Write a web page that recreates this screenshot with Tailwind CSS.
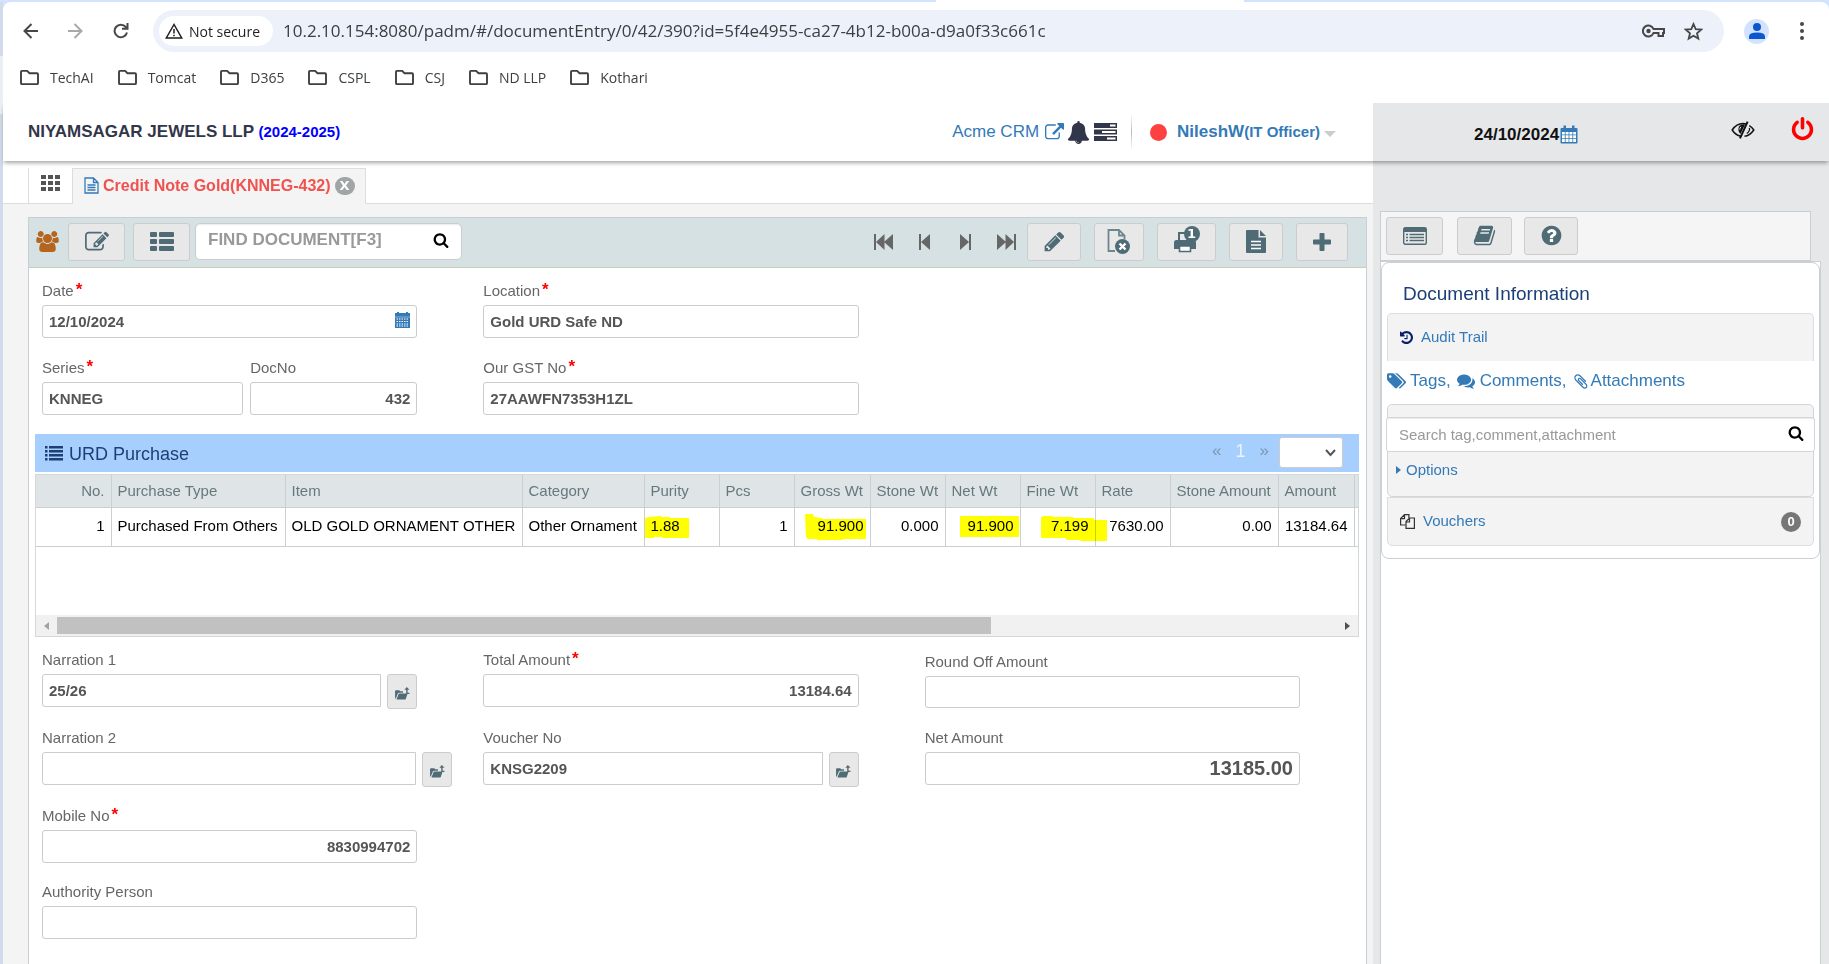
<!DOCTYPE html>
<html lang="en">
<head>
  <title>Credit Note Gold(KNNEG-432)</title>
  <meta charset="utf-8">
  <meta name="viewport" content="width=device-width, initial-scale=1">
  <script src="https://cdn.jsdelivr.net/npm/@tailwindcss/browser@4"></script>
</head>
<body class="min-h-screen flex flex-col bg-[#d3e3fd] font-['Liberation_Sans',Arial,sans-serif] text-[15px]">

  <!-- shared icons -->
  <svg class="hidden">
    <symbol id="i-search" viewBox="0 0 1792 1792"><path d="M1216 832q0-185-131.5-316.5t-316.5-131.5-316.5 131.5-131.5 316.5 131.5 316.5 316.5 131.5 316.5-131.5 131.5-316.5zm512 832q0 52-38 90t-90 38q-54 0-90-38l-343-342q-179 124-399 124-143 0-273.5-55.5t-225-150-150-225-55.5-273.5 55.5-273.5 150-225 225-150 273.5-55.5 273.5 55.5 225 150 150 225 55.5 273.5q0 220-124 399l343 343q37 37 37 90z"/></symbol>
    <symbol id="i-folder" viewBox="0 0 22 18"><path d="M2 15V3q0-1 1-1h5.500l2.500 2.500h8q1 0 1 1V15q0 1-1 1H3q-1 0-1-1z" fill="none" stroke="currentColor" stroke-width="2"/></symbol>
    <symbol id="i-open" viewBox="0 0 16 14"><path d="M0 12.500V4.500q0-1 1-1h3.500l1 1h3v1.700H4.200q-.8 0-1.200.8L.8 12.500zM1.500 13.500l2.200-5.700q.3-.7 1-.7h8.800l-2 5.700q-.3.7-1 .7z"/><path d="M12.700 0l2.800 3h-2v3.300h2V7.500H12V3h-2z"/></symbol>
  </svg>

  <!-- tab strip edge -->
  <div class="h-[2px] flex">
    <div class="ml-[51.200%] w-[308px] bg-white"></div>
  </div>

  <div class="flex-1 flex">
    <div class="w-[3px] bg-[#d1dbea] flex flex-col">
      <div class="mt-[54px] h-[58px] bg-[#ebeff4]"></div>
    </div>

    <div class="flex-1 min-w-0 flex flex-col bg-white rounded-t-lg">

      <!-- browser toolbar -->
      <div class="mt-2 h-[42px] flex items-center text-[#3c4043] font-['Open_Sans','Noto_Sans',sans-serif]">
        <button type="button" aria-label="Back" class="ml-5 w-4">
          <svg class="w-4 h-4" viewBox="0 0 16 16" fill="none" stroke="#474747" stroke-width="2"><path d="M15 8H2M8.500 1L1.500 8l7 7"/></svg>
        </button>
        <button type="button" aria-label="Forward" class="ml-7 w-4">
          <svg class="w-4 h-4" viewBox="0 0 16 16" fill="none" stroke="#a9a9a9" stroke-width="2"><path d="M1 8h13M7.500 1l7 7-7 7"/></svg>
        </button>
        <button type="button" aria-label="Reload" class="ml-[30px] w-4">
          <svg class="w-4 h-4" viewBox="0 0 16 16" fill="none" stroke="#474747" stroke-width="2"><path d="M14 9.500A6.300 6.300 0 1 1 12.800 4L14 5.300"/><path d="M14.500 0v5.800H9"/></svg>
        </button>
        <div class="ml-6 mr-[20px] pl-1.5 flex-1 h-full rounded-full bg-[#ecf1fa] flex items-center">
          <button type="button" class="h-[30px] w-[114px] pl-1.5 rounded-full bg-white text-[#1f1f1f] text-[14px] flex items-center gap-1.5">
            <svg class="w-[18px] h-[16px]" viewBox="0 0 18 16" fill="none" stroke="#1f1f1f" stroke-width="1.500"><path d="M9 1.500L1.300 15h15.400zM9 6v4.500M9 11.700v1.600"/></svg>
            Not secure
          </button>
          <input type="text" aria-label="Address" value="10.2.10.154:8080/padm/#/documentEntry/0/42/390?id=5f4e4955-ca27-4b12-b00a-d9a0f33c661c" class="ml-[10px] flex-1 bg-transparent text-[17px] outline-none">
          <button type="button" aria-label="Passwords" class="mr-[19px]">
            <svg class="w-[23px] h-[14px]" viewBox="0 0 23 14" fill="none" stroke="#474747" stroke-width="2"><path d="M11.500 5A5.500 5.500 0 1 0 11.500 9H15v0h1.500v3h4.500V9h1V5z"/><circle cx="6.500" cy="7" r="2.200" fill="#474747" stroke="none"/></svg>
          </button>
          <button type="button" aria-label="Bookmark" class="mr-[21px]">
            <svg class="w-[19px] h-[19px]" viewBox="0 0 19 19" fill="none" stroke="#474747" stroke-width="1.800"><path d="M9.500 2l2.200 5.100 5.500.5-4.200 3.600 1.300 5.400-4.800-2.900-4.800 2.900L6 11.200 1.800 7.600l5.500-.5z"/></svg>
          </button>
        </div>
        <button type="button" aria-label="Profile" class="w-[25px] h-[25px] rounded-full bg-[#d3e3fd] flex items-center justify-center">
          <svg class="w-4 h-4" viewBox="0 0 16 16" fill="#0b57d0"><circle cx="8" cy="4" r="4"/><path d="M0 16v-2.500Q0 9.500 8 9.500t8 4V16z"/></svg>
        </button>
        <button type="button" aria-label="Menu" class="ml-[31px] mr-[25px]">
          <svg class="w-1 h-[18px]" viewBox="0 0 4 18" fill="#474747"><circle cx="2" cy="2" r="2"/><circle cx="2" cy="9" r="2"/><circle cx="2" cy="16" r="2"/></svg>
        </button>
      </div>

      <!-- bookmarks -->
      <nav class="h-[51px] pl-4 flex items-center gap-[23px] text-[14px] text-[#3c4043] font-['Open_Sans','Noto_Sans',sans-serif]">
        <a href="#" class="flex items-center gap-2.5"><svg class="w-[21px] h-[17px]"><use href="#i-folder"/></svg>TechAI</a>
        <a href="#" class="flex items-center gap-2.5"><svg class="w-[21px] h-[17px]"><use href="#i-folder"/></svg>Tomcat</a>
        <a href="#" class="flex items-center gap-2.5"><svg class="w-[21px] h-[17px]"><use href="#i-folder"/></svg>D365</a>
        <a href="#" class="flex items-center gap-2.5"><svg class="w-[21px] h-[17px]"><use href="#i-folder"/></svg>CSPL</a>
        <a href="#" class="flex items-center gap-2.5"><svg class="w-[21px] h-[17px]"><use href="#i-folder"/></svg>CSJ</a>
        <a href="#" class="flex items-center gap-2.5"><svg class="w-[21px] h-[17px]"><use href="#i-folder"/></svg>ND LLP</a>
        <a href="#" class="flex items-center gap-2.5"><svg class="w-[21px] h-[17px]"><use href="#i-folder"/></svg>Kothari</a>
      </nav>

      <!-- app header -->
      <header class="relative z-10 h-[58px] flex shadow-[0_3px_4px_-1px_rgba(0,0,0,0.35)]">
        <div class="flex-1 pl-[25px] pr-[37px] bg-white flex items-center">
          <h1 class="font-bold text-[17px] text-[#32364a]">NIYAMSAGAR JEWELS LLP <span class="text-[15px] text-[#0000ff]">(2024-2025)</span></h1>
          <a href="#" class="ml-auto flex items-center gap-1.5 text-[17px] text-[#337ab7]">
            Acme CRM
            <svg class="w-[19px] h-[19px]" viewBox="0 0 1792 1792" fill="currentColor"><path d="M1408 928v320q0 119-84.500 203.500t-203.500 84.500h-832q-119 0-203.500-84.500t-84.500-203.500v-832q0-119 84.500-203.500t203.500-84.500h704q14 0 23 9t9 23v64q0 14-9 23t-23 9h-704q-66 0-113 47t-47 113v832q0 66 47 113t113 47h832q66 0 113-47t47-113v-320q0-14 9-23t23-9h64q14 0 23 9t9 23zm384-864v512q0 26-19 45t-45 19-45-19l-176-176-652 652q-10 10-23 10t-23-10l-114-114q-10-10-10-23t10-23l652-652-176-176q-19-19-19-45t19-45 45-19h512q26 0 45 19t19 45z"/></svg>
          </a>
          <button type="button" aria-label="Notifications" class="ml-[3px]">
            <svg class="w-[23px] h-[23px]" viewBox="0 0 1792 1792" fill="#32364a"><path d="M912 1696q0-16-16-16-59 0-101.500-42.500t-42.500-101.500q0-16-16-16t-16 16q0 73 51.500 124.500t124.500 51.500q16 0 16-16zm816-288q0 52-38 90t-90 38h-448q0 106-75 181t-181 75-181-75-75-181h-448q-52 0-90-38t-38-90q50-42 91-88t85-119.500 74.500-158.500 50-206 19.500-260q0-152 117-282.500t307-158.500q-8-19-8-39 0-40 28-68t68-28 68 28 28 68q0 20-8 39 190 28 307 158.500t117 282.500q0 139 19.500 260t50 206 74.500 158.500 85 119.500 91 88z"/></svg>
          </button>
          <button type="button" aria-label="Tasks" class="ml-1">
            <svg class="w-[23px] h-[18px]" viewBox="0 0 23 18"><path fill="#32364a" d="M0 0h23v5H0zM0 6.500h23v5H0zM0 13h23v5H0z"/><path fill="#fff" d="M16 1.500h5.500v2H16zM8 8h13.500v2H8zM13 14.500h8.500v2H13z"/></svg>
          </button>
          <div class="ml-[14px] w-px h-[38px] bg-linear-to-b from-transparent via-[#bbb] to-transparent"></div>
          <span class="ml-[18px] w-[17px] h-[17px] rounded-full bg-[#ff4040]"></span>
          <button type="button" class="ml-2.5 font-bold text-[17px] text-[#337ab7] flex items-center">
            <span>NileshW<span class="text-[15px]">(IT Officer)</span></span>
            <span class="ml-1 mt-1 border-x-6 border-t-6 border-x-transparent border-t-[#ccc]"></span>
          </button>
        </div>
        <div class="w-[456px] bg-[#e6e7e9] pl-[101px] pr-[14px] flex items-center">
          <time class="mt-1.5 font-bold text-[17px] text-[#111]">24/10/2024</time>
          <svg class="ml-px mt-1 w-[18px] h-[19px]" viewBox="0 0 18 19"><path fill="#337ab7" d="M1.500 3h15q1 0 1 1v13.500q0 1-1 1h-15q-1 0-1-1V4q0-1 1-1zM3.500.5h2.500v4H3.500zM12 .5h2.500v4H12z"/><path fill="#fff" d="M2 7h2.800v2.500H2zM5.600 7h3v2.500h-3zM9.400 7h3v2.500h-3zM13.200 7H16v2.500h-2.800zM2 10.300h2.800V13H2zM5.600 10.300h3V13h-3zM9.400 10.300h3V13h-3zM13.200 10.300H16V13h-2.800zM2 13.800h2.800V17H2zM5.600 13.800h3V17h-3zM9.400 13.800h3V17h-3zM13.200 13.800H16V17h-2.800z"/></svg>
          <button type="button" aria-label="Hide" class="ml-auto mb-1">
            <svg class="w-6 h-[18px]" viewBox="0 0 24 18" fill="none" stroke="#111" stroke-width="1.500"><path d="M15.500 3.300Q13.800 2.600 12 2.600 5.500 2.600 1.200 9q3.600 5.500 8.600 6.200"/><path d="M18.300 4.700Q21 6.400 22.800 9q-4 5.800-9.300 6.300"/><path d="M18.400 7q.8 3-2.600 5.600" stroke-width="1.300"/><path d="M8.300 5Q5.800 9.500 9.500 13L14 3.500Q10.500 2.800 8.300 5z" fill="#111" stroke="none"/><path d="M10 5.800Q8.600 7 8.800 8.600" stroke="#e6e7e9" stroke-width="1"/><path d="M9 17.300L16.600.7" stroke-width="2"/></svg>
          </button>
          <button type="button" aria-label="Log out" class="ml-[35px] mb-[5px]">
            <svg class="w-[25px] h-[25px]" viewBox="0 0 1792 1792" fill="#ff0000"><path d="M1664 896q0 156-61 298t-164 245-245 164-298 61-298-61-245-164-164-245-61-298q0-182 80.500-343t226.500-270q43-32 95.500-25t83.500 50q32 42 24.500 94.500t-49.500 84.500q-98 74-151.500 181t-53.500 228q0 104 40.500 198.500t109.500 163.500 163.500 109.500 198.500 40.500 198.500-40.500 163.500-109.500 109.500-163.500 40.500-198.500q0-121-53.500-228t-151.500-181q-42-32-49.500-84.500t24.500-94.500q31-43 84-50t95 25q146 109 226.500 270t80.500 343zm-640-768v640q0 52-38 90t-90 38-90-38-38-90v-640q0-52 38-90t90-38 90 38 38 90z"/></svg>
          </button>
        </div>
      </header>

      <div class="flex-1 flex">
        <main class="flex-1 min-w-0 flex flex-col bg-[#f4f4f4]">

          <!-- document tabs -->
          <div class="h-[43px] bg-white flex items-end">
            <div class="w-[25px] h-[36px] border-b border-[#ddd]"></div>
            <button type="button" aria-label="All modules" class="w-[44px] h-[36px] border-l border-b border-[#ddd] flex justify-center pt-[7px]">
              <svg class="w-[19px] h-[16px]" viewBox="0 0 19 16" fill="#555"><path d="M0 0h5v4H0zM7 0h5v4H7zM14 0h5v4h-5zM0 6h5v4H0zM7 6h5v4H7zM14 6h5v4h-5zM0 12h5v4H0zM7 12h5v4H7zM14 12h5v4h-5z"/></svg>
            </button>
            <div class="w-[294px] h-[36px] border-x border-t border-[#ddd] bg-[#f4f4f4] pl-[11px] pb-[2px] flex items-center">
              <svg class="w-[15px] h-[17px]" viewBox="0 0 15 17" fill="none" stroke="#337ab7" stroke-width="1.300"><path d="M1 1h8.500L14 5.500V16H1zM9.500 1v4.500H14M3.500 8h8M3.500 10.500h8M3.500 13h8"/></svg>
              <a href="#" class="ml-[4px] font-bold text-[16px] text-[#f0524f]">Credit Note Gold(KNNEG-432)</a>
              <button type="button" aria-label="Close" class="ml-1 w-5 h-[18px] rounded-full bg-[#a0a5a5] text-white text-[13px] font-bold leading-[18px] font-['DejaVu_Sans',sans-serif]">X</button>
            </div>
            <div class="flex-1 h-[36px] border-b border-[#ddd]"></div>
          </div>

          <section class="flex-1 mt-[13px] ml-[25px] mr-[6px] bg-white border border-b-0 border-[#c8cfd2]">

            <!-- document toolbar -->
            <div class="h-[50px] pl-[7px] pr-[18px] pb-[2px] bg-[#d6e1e4] border-b border-[#c6cfb6] flex items-center text-[#4f6b76]">
              <svg class="w-[23px] h-[21px]" viewBox="-64 0 1920 1792" fill="#b5651d"><path d="M529 896q-162 5-265 128h-134q-82 0-138-40.500t-56-118.500q0-353 124-353 6 0 43.500 21t97.500 42.500 119 21.500q67 0 133-23-5 37-5 66 0 139 81 256zm1071 637q0 120-73 189.500t-194 69.500h-874q-121 0-194-69.500t-73-189.500q0-53 3.500-103.500t14-109 26.500-108.500 43-97.500 62-81 85.500-53.500 111.500-20q10 0 43 21.500t73 48 107 48 135 21.500 135-21.500 107-48 73-48 43-21.500q61 0 111.500 20t85.500 53.500 62 81 43 97.500 26.500 108.500 14 109 3.500 103.500zm-1024-1277q0 106-75 181t-181 75-181-75-75-181 75-181 181-75 181 75 75 181zm704 384q0 159-112.500 271.500t-271.500 112.500-271.500-112.500-112.500-271.500 112.500-271.500 271.500-112.500 271.500 112.500 112.500 271.500zm576 225q0 78-56 118.500t-138 40.500h-134q-103-123-265-128 81-117 81-256 0-29-5-66 66 23 133 23 59 0 119-21.500t97.500-42.500 43.500-21q124 0 124 353zm-128-609q0 106-75 181t-181 75-181-75-75-181 75-181 181-75 181 75 75 181z"/></svg>
              <button type="button" aria-label="Edit entry" class="ml-[9px] w-[57px] h-[38px] rounded-[3px] border border-[#ccc] bg-[#e8e8e8] flex items-center justify-center">
                <svg class="w-[24px] h-[24px]" viewBox="0 0 1792 1792" fill="currentColor"><path d="M888 1184l116-116-152-152-116 116v56h96v96h56zm440-720q-16-16-33 1l-350 350q-17 17-1 33t33-1l350-350q17-17 1-33zm80 594v190q0 119-84.500 203.500t-203.500 84.500h-832q-119 0-203.500-84.500t-84.500-203.500v-832q0-119 84.500-203.500t203.500-84.500h832q63 0 117 25 15 7 18 23 3 17-9 29l-49 49q-14 14-32 8-23-6-45-6h-832q-66 0-113 47t-47 113v832q0 66 47 113t113 47h832q66 0 113-47t47-113v-126q0-13 9-22l64-64q15-15 35-7t20 29zm-96-738l288 288-672 672h-288v-288zm444 132l-92 92-288-288 92-92q28-28 68-28t68 28l152 152q28 28 28 68t-28 68z"/></svg>
              </button>
              <button type="button" aria-label="List" class="ml-2 w-[57px] h-[38px] rounded-[3px] border border-[#ccc] bg-[#e8e8e8] flex items-center justify-center">
                <svg class="w-6 h-[19px]" viewBox="0 0 24 19" fill="currentColor"><rect width="7" height="5" rx="1"/><rect x="9" width="15" height="5" rx="1"/><rect y="7" width="7" height="5" rx="1"/><rect x="9" y="7" width="15" height="5" rx="1"/><rect y="14" width="7" height="5" rx="1"/><rect x="9" y="14" width="15" height="5" rx="1"/></svg>
              </button>
              <div class="ml-[5px] w-[267px] h-[37px] px-3 pb-[3px] rounded-[5px] border border-[#ccc] bg-white shadow-[inset_0_1px_1px_rgba(0,0,0,0.08)] flex items-center">
                <input type="text" aria-label="Find document" placeholder="FIND DOCUMENT[F3]" class="min-w-0 flex-1 font-bold text-[17px] placeholder:text-[#999] outline-none">
                <svg class="w-4 h-4 text-black"><use href="#i-search" fill="currentColor"/></svg>
              </div>
              <div class="ml-auto flex text-[#666]">
                <button type="button" aria-label="First" class="w-[41px] flex justify-center"><svg class="w-[19px] h-4" viewBox="0 0 19 16" fill="currentColor"><path d="M0 0h2v16H0zM2 8l8.500-8v16zM10 8l9-8v16z"/></svg></button>
                <button type="button" aria-label="Previous" class="w-[41px] flex justify-center"><svg class="w-[11px] h-4" viewBox="0 0 11 16" fill="currentColor"><path d="M0 0h2v16H0zM2 8l9-8v16z"/></svg></button>
                <button type="button" aria-label="Next" class="w-[41px] flex justify-center"><svg class="w-[11px] h-4" viewBox="0 0 11 16" fill="currentColor"><path d="M9 0h2v16H9zM9 8L0 0v16z"/></svg></button>
                <button type="button" aria-label="Last" class="w-[41px] flex justify-center"><svg class="w-[19px] h-4" viewBox="0 0 19 16" fill="currentColor"><path d="M17 0h2v16h-2zM17 8L8.500 0v16zM9 8L0 0v16z"/></svg></button>
              </div>
              <div class="flex gap-[13px]">
                <button type="button" aria-label="Edit" class="w-[54px] h-[38px] rounded-[3px] border border-[#ccc] bg-[#e8e8e8] flex items-center justify-center">
                  <svg class="w-[23px] h-[23px]" viewBox="0 0 1792 1792" fill="currentColor"><path d="M491 1536l91-91-235-235-91 91v107h128v128h107zm523-928q0-22-22-22-10 0-17 7l-542 542q-7 7-7 17 0 22 22 22 10 0 17-7l542-542q7-7 7-17zm-54-192l416 416-832 832h-416v-416zm683 96q0 53-37 90l-166 166-416-416 166-165q36-38 90-38 53 0 91 38l235 234q37 39 37 91z"/></svg>
                </button>
                <button type="button" aria-label="Cancel document" class="w-[50px] h-[38px] rounded-[3px] border border-[#ccc] bg-[#e8e8e8] flex items-center justify-center">
                  <svg class="w-6 h-[26px]" viewBox="0 0 24 26"><path d="M8 22H1.500V1H12l5.500 5.500V10M12 1v5.500h5.500" fill="none" stroke="#6d8790" stroke-width="1.800"/><circle cx="15.500" cy="17.500" r="7.500" fill="#4f6b76"/><path d="M12.500 14.500l6 6M18.500 14.500l-6 6" stroke="#fff" stroke-width="2.400"/></svg>
                </button>
                <button type="button" aria-label="Print" class="w-[59px] h-[38px] rounded-[3px] border border-[#ccc] bg-[#e8e8e8] flex items-center justify-center">
                  <span class="relative -mt-1">
                    <svg class="w-[26px] h-[27px]" viewBox="0 0 26 27"><path d="M5 16V7h9l4 4v5" fill="none" stroke="#4f6b76" stroke-width="2"/><path d="M2.500 14h17q2.500 0 2.500 2.500V23H0v-6.500Q0 14 2.500 14z" fill="#4f6b76"/><path d="M5.500 20h11v5.500h-11z" fill="#fff" stroke="#4f6b76" stroke-width="1.600"/></svg>
                    <span class="absolute top-0 right-0 w-4 h-4 rounded-full bg-[#4f6b76] text-white text-[13px] font-bold leading-4 text-center font-['DejaVu_Sans',sans-serif]">1</span>
                  </span>
                </button>
                <button type="button" aria-label="Report" class="w-[54px] h-[38px] rounded-[3px] border border-[#ccc] bg-[#e8e8e8] flex items-center justify-center">
                  <svg class="w-5 h-[23px]" viewBox="0 0 20 23"><path d="M1 0h11.500v7.500H20V22q0 1-1 1H1q-1 0-1-1V1q0-1 1-1zM14 0l6 6h-6z" fill="#4f6b76"/><path d="M5 11.500h10M5 15h10M5 18.500h10" stroke="#fff" stroke-width="1.500"/></svg>
                </button>
                <button type="button" aria-label="New" class="w-[52px] h-[38px] rounded-[3px] border border-[#ccc] bg-[#e8e8e8] flex items-center justify-center">
                  <svg class="w-[18px] h-[18px]" viewBox="0 0 18 18" fill="currentColor"><path d="M7.500 0h3q1 0 1 1v5.500H17q1 0 1 1v3q0 1-1 1h-5.500V17q0 1-1 1h-3q-1 0-1-1v-5.500H1q-1 0-1-1v-3q0-1 1-1h5.500V1q0-1 1-1z"/></svg>
                </button>
              </div>
            </div>

            <div class="pl-[6px] pr-[7px] pt-[13px] text-[#666]">
              <div class="grid grid-cols-3 gap-y-5 pl-[7px] -mr-[7px]">
                <div class="mr-[66px]">
                  <label for="date" class="block h-6 leading-[20px]">Date<span class="ml-[2px] text-[17px] leading-none font-bold text-[#f00] align-top">*</span></label>
                  <div class="h-[33px] px-1.5 rounded-[3px] border border-[#ccc] flex items-center">
                    <input id="date" type="text" value="12/10/2024" class="min-w-0 flex-1 h-full font-bold text-[#555] outline-none">
                    <svg class="mb-1 w-[15px] h-4" viewBox="0 0 15 16"><path fill="#337ab7" d="M0 1h2V0h2v1h7V0h2v1h2v15H0z"/><path d="M1.500 7h12M1.500 9.500h12M1.500 12h12M1.500 14h12" stroke="#fff" stroke-width="1" stroke-dasharray="1.500 1"/><path d="M0 5h15" stroke="#9fc0de" stroke-width=".8"/></svg>
                  </div>
                </div>
                <div class="mr-[66px]">
                  <label for="location" class="block h-6 leading-[20px]">Location<span class="ml-[2px] text-[17px] leading-none font-bold text-[#f00] align-top">*</span></label>
                  <input id="location" type="text" value="Gold URD Safe ND" class="w-full h-[33px] px-1.5 rounded-[3px] border border-[#ccc] font-bold text-[#555]">
                </div>
                <div class="col-start-1 mr-[66px] flex gap-[7px]">
                  <div class="flex-[201] min-w-0">
                    <label for="series" class="block h-6 leading-[20px]">Series<span class="ml-[2px] text-[17px] leading-none font-bold text-[#f00] align-top">*</span></label>
                    <input id="series" type="text" value="KNNEG" class="w-full h-[33px] px-1.5 rounded-[3px] border border-[#ccc] font-bold text-[#555]">
                  </div>
                  <div class="flex-[167] min-w-0">
                    <label for="docno" class="block h-6 leading-[20px]">DocNo</label>
                    <input id="docno" type="text" value="432" class="w-full h-[33px] px-1.5 rounded-[3px] border border-[#ccc] font-bold text-[#555] text-right">
                  </div>
                </div>
                <div class="mr-[66px]">
                  <label for="gst" class="block h-6 leading-[20px]">Our GST No<span class="ml-[2px] text-[17px] leading-none font-bold text-[#f00] align-top">*</span></label>
                  <input id="gst" type="text" value="27AAWFN7353H1ZL" class="w-full h-[33px] px-1.5 rounded-[3px] border border-[#ccc] font-bold text-[#555]">
                </div>
              </div>

              <!-- purchase grid -->
              <div class="mt-[19px] h-[38px] pl-[10px] pr-4 bg-[#a7cffd] flex items-center text-[#1d3f77]">
                <svg class="w-[18px] h-[15px]" viewBox="0 0 18 15" fill="currentColor"><path d="M0 0h2.500v2.500H0zM4 0h14v2.500H4zM0 4h2.500v2.500H0zM4 4h14v2.500H4zM0 8h2.500v2.500H0zM4 8h14v2.500H4zM0 12h2.500v2.500H0zM4 12h14v2.500H4z"/></svg>
                <h2 class="ml-[6px] pt-[2px] text-[18px]">URD Purchase</h2>
                <button type="button" class="ml-auto mb-1 text-[17px] text-[#7d95b5]">«</button>
                <button type="button" class="mx-[14px] mb-1 text-[18px] text-[#eaf3ff]">1</button>
                <button type="button" class="mb-1 text-[17px] text-[#7d95b5]">»</button>
                <div class="relative ml-[10px] mb-[2px]">
                  <select aria-label="Rows per page" class="block w-[64px] h-[31px] appearance-none rounded-[3px] border border-[#ccc] bg-white"><option></option></select>
                  <svg class="absolute right-[7px] top-[12px] w-[11px] h-2 pointer-events-none" viewBox="0 0 11 8" fill="none" stroke="#555" stroke-width="2"><path d="M1 1l4.500 5L10 1"/></svg>
                </div>
              </div>
              <div class="mt-[2px] h-[163px] border border-[#d5d8d9] flex flex-col overflow-hidden">
                <table class="w-full table-fixed border-collapse text-[15px] whitespace-nowrap">
                  <colgroup>
                    <col class="w-[75px]"><col class="w-[174px]"><col class="w-[237px]"><col class="w-[122px]"><col class="w-[75px]"><col class="w-[75px]"><col class="w-[76px]"><col class="w-[75px]"><col class="w-[75px]"><col class="w-[75px]"><col class="w-[75px]"><col class="w-[108px]"><col class="w-[76px]"><col>
                  </colgroup>
                  <thead>
                    <tr class="h-8 bg-[#dfe5e7] text-[#66787e] text-left border-b border-[#c8d0d3]">
                      <th class="px-1.5 font-normal text-right border-r border-[#c8d0d3]">No.</th>
                      <th class="px-1.5 font-normal border-r border-[#c8d0d3]">Purchase Type</th>
                      <th class="px-1.5 font-normal border-r border-[#c8d0d3]">Item</th>
                      <th class="px-1.5 font-normal border-r border-[#c8d0d3]">Category</th>
                      <th class="px-1.5 font-normal border-r border-[#c8d0d3]">Purity</th>
                      <th class="px-1.5 font-normal border-r border-[#c8d0d3]">Pcs</th>
                      <th class="px-1.5 font-normal border-r border-[#c8d0d3]">Gross Wt</th>
                      <th class="px-1.5 font-normal border-r border-[#c8d0d3]">Stone Wt</th>
                      <th class="px-1.5 font-normal border-r border-[#c8d0d3]">Net Wt</th>
                      <th class="px-1.5 font-normal border-r border-[#c8d0d3]">Fine Wt</th>
                      <th class="px-1.5 font-normal border-r border-[#c8d0d3]">Rate</th>
                      <th class="px-1.5 font-normal border-r border-[#c8d0d3]">Stone Amount</th>
                      <th class="px-1.5 font-normal border-r border-[#c8d0d3]">Amount</th>
                      <th></th>
                    </tr>
                  </thead>
                  <tbody>
                    <tr class="h-[39px] text-black text-right border-b border-[#c8d0d3]">
                      <td class="px-1.5 border-r border-[#c8d0d3]">1</td>
                      <td class="px-1.5 text-left border-r border-[#c8d0d3]">Purchased From Others</td>
                      <td class="px-1.5 text-left border-r border-[#c8d0d3]">OLD GOLD ORNAMENT OTHER</td>
                      <td class="px-1.5 text-left border-r border-[#c8d0d3]">Other Ornament</td>
                      <td class="relative px-1.5 text-left border-r border-[#c8d0d3]"><svg class="absolute left-0 top-[8px] w-[44px] h-[23px] mix-blend-multiply" viewBox="0 0 44 23" fill="#ffff00"><path d="M0 2l4-1 12-1 1 1h8v1h19v20H18l-1-1H9v1H0z"/></svg><span class="relative">1.88</span></td>
                      <td class="px-1.5 border-r border-[#c8d0d3]">1</td>
                      <td class="relative px-1.5 border-r border-[#c8d0d3]"><svg class="absolute right-[4px] top-[6px] w-[61px] h-[27px] mix-blend-multiply" viewBox="0 0 61 27" fill="#ffff00"><path d="M0 0h8l1 3 8 1v1h44v20H38v1H12v-1H3l-2-2z"/></svg><span class="relative">91.900</span></td>
                      <td class="px-1.5 border-r border-[#c8d0d3]">0.000</td>
                      <td class="relative px-1.5 border-r border-[#c8d0d3]"><svg class="absolute right-[1px] top-[8px] w-[59px] h-[21px] mix-blend-multiply" viewBox="0 0 59 21" fill="#ffff00"><path d="M0 0h59v21H0z"/></svg><span class="relative">91.900</span></td>
                      <td class="relative px-1.5 border-r border-[#c8d0d3]"><svg class="absolute left-[20px] top-[8px] w-[66px] h-[26px] mix-blend-multiply" viewBox="0 0 66 26" fill="#ffff00"><path d="M0 1l3-1h9v1h20l1 1h20v2h13v21H40l-1-1H26l-2-2H0z"/></svg><span class="relative">7.199</span></td>
                      <td class="px-1.5 border-r border-[#c8d0d3]">7630.00</td>
                      <td class="px-1.5 border-r border-[#c8d0d3]">0.00</td>
                      <td class="px-1.5 border-r border-[#c8d0d3]">13184.64</td>
                      <td></td>
                    </tr>
                  </tbody>
                </table>
                <div class="mt-auto h-[21px] px-2 bg-[#f1f1f1] flex items-center">
                  <span class="border-y-4 border-r-5 border-y-transparent border-r-[#a3a3a3]"></span>
                  <div class="flex-1 mx-2"><div class="w-[73%] h-[17px] bg-[#c1c1c1]"></div></div>
                  <span class="border-y-4 border-l-5 border-y-transparent border-l-[#505050]"></span>
                </div>
              </div>

              <div class="mt-[13px] grid grid-cols-3 gap-y-[19px] pl-[7px] -mr-[7px]">
                <div class="mr-[66px]">
                  <label for="narration1" class="block h-6 leading-[20px]">Narration 1</label>
                  <div class="flex gap-1.5">
                    <input id="narration1" type="text" value="25/26" class="min-w-0 flex-1 h-[33px] px-1.5 rounded-l-[3px] border border-[#ccc] font-bold text-[#555]">
                    <button type="button" aria-label="Browse narration 1" class="w-[30px] h-[35px] pt-1 rounded-[3px] border border-[#ccc] bg-[#e8e8e8] flex items-center justify-center"><svg class="w-[15px] h-[13px] text-[#4f6b76]"><use href="#i-open" fill="currentColor"/></svg></button>
                  </div>
                </div>
                <div class="mr-[66px]">
                  <label for="total" class="block h-6 leading-[20px]">Total Amount<span class="ml-[2px] text-[17px] leading-none font-bold text-[#f00] align-top">*</span></label>
                  <input id="total" type="text" value="13184.64" class="w-full h-[33px] px-1.5 rounded-[3px] border border-[#ccc] font-bold text-[#555] text-right">
                </div>
                <div class="mr-[66px] pt-[2px]">
                  <label for="roundoff" class="block h-6 leading-[20px]">Round Off Amount</label>
                  <input id="roundoff" type="text" class="block w-full h-8 px-1.5 rounded-[3px] border border-[#ccc] font-bold text-[#555] text-right">
                </div>

                <div class="mr-[31px]">
                  <label for="narration2" class="block h-6 leading-[20px]">Narration 2</label>
                  <div class="flex gap-1.5">
                    <input id="narration2" type="text" class="min-w-0 flex-1 h-[33px] px-1.5 rounded-l-[3px] border border-[#ccc] font-bold text-[#555]">
                    <button type="button" aria-label="Browse narration 2" class="w-[30px] h-[35px] pt-1 rounded-[3px] border border-[#ccc] bg-[#e8e8e8] flex items-center justify-center"><svg class="w-[15px] h-[13px] text-[#4f6b76]"><use href="#i-open" fill="currentColor"/></svg></button>
                  </div>
                </div>
                <div class="mr-[66px]">
                  <label for="voucher" class="block h-6 leading-[20px]">Voucher No</label>
                  <div class="flex gap-1.5">
                    <input id="voucher" type="text" value="KNSG2209" class="min-w-0 flex-1 h-[33px] px-1.5 rounded-l-[3px] border border-[#ccc] font-bold text-[#555]">
                    <button type="button" aria-label="Browse vouchers" class="w-[30px] h-[35px] pt-1 rounded-[3px] border border-[#ccc] bg-[#e8e8e8] flex items-center justify-center"><svg class="w-[15px] h-[13px] text-[#4f6b76]"><use href="#i-open" fill="currentColor"/></svg></button>
                  </div>
                </div>
                <div class="mr-[66px]">
                  <label for="net" class="block h-6 leading-[20px]">Net Amount</label>
                  <input id="net" type="text" value="13185.00" class="w-full h-[33px] px-1.5 rounded-[3px] border border-[#ccc] font-bold text-[20px] text-[#555] text-right">
                </div>

                <div class="col-start-1 mr-[66px]">
                  <label for="mobile" class="block h-6 leading-[20px]">Mobile No<span class="ml-[2px] text-[17px] leading-none font-bold text-[#f00] align-top">*</span></label>
                  <input id="mobile" type="text" value="8830994702" class="w-full h-[33px] px-1.5 rounded-[3px] border border-[#ccc] font-bold text-[#555] text-right">
                </div>
                <div class="col-start-1 mr-[66px]">
                  <label for="authority" class="block h-6 leading-[20px]">Authority Person</label>
                  <input id="authority" type="text" class="w-full h-[33px] px-1.5 rounded-[3px] border border-[#ccc] font-bold text-[#555]">
                </div>
              </div>
            </div>
          </section>
        </main>

        <!-- side panel -->
        <aside class="w-[456px] pt-[50px] pl-[7px] pr-2 bg-[#e6e7e9] flex flex-col">
          <div class="mr-[10px] h-[50px] pl-[5px] pb-px bg-[#f5f5f5] border border-[#c8cfd2] flex items-center text-[#4f6b76]">
            <button type="button" aria-label="Details" class="w-[57px] h-[38px] rounded-[3px] border border-[#ccc] bg-[#e8e8e8] flex items-center justify-center">
              <svg class="w-6 h-[18px]" viewBox="0 0 24 18"><rect x=".7" y=".7" width="22.600" height="16.600" rx="1.500" fill="#e8e8e8" stroke="currentColor" stroke-width="1.400"/><path d="M1 1h22v4H1z" fill="currentColor"/><path d="M3 7.500h2M6.500 7.500H21M3 10.500h2M6.500 10.500H21M3 13.500h2M6.500 13.500H21" stroke="currentColor" stroke-width="1.300"/></svg>
            </button>
            <button type="button" aria-label="Ledger" class="ml-[14px] w-[55px] h-[38px] rounded-[3px] border border-[#ccc] bg-[#e8e8e8] flex items-center justify-center">
              <svg class="w-[23px] h-[23px]" viewBox="0 0 1792 1792" fill="currentColor"><path d="M1703 478q40 57 18 129l-275 906q-19 64-76.500 107.500t-122.500 43.500h-923q-77 0-148.500-53.500t-99.500-131.500q-24-67-2-127 0-4 3-27t4-37q1-8-3-21.500t-3-19.500q2-11 8-21t16.500-23.500 16.500-23.500q23-38 45-91.500t30-91.500q3-10 .5-30t-.5-28q3-11 17-28t17-23q21-36 42-92t25-90q1-9-2.500-32t.5-28q4-13 22-30.500t22-22.500q19-26 42.500-84.500t27.500-96.500q1-8-3-25.500t-2-26.500q2-8 9-18t18-23 17-21q8-12 16.500-30.500t15-35 16-36 19.500-32 26.500-23.500 36-11.500 47.500 5.500l-1 3q38-9 51-9h761q74 0 114 56t18 130l-274 906q-36 119-71.500 153.500t-128.500 34.500h-869q-27 0-38 15-11 16-1 43 24 70 144 70h923q29 0 56-15.500t35-41.500l300-987q7-22 5-57 38 15 59 43zm-1064 2q-4 13 2 22.500t20 9.500h608q13 0 25.500-9.500t16.500-22.500l21-64q4-13-2-22.500t-20-9.500h-608q-13 0-25.500 9.500t-16.500 22.500zm-83 256q-4 13 2 22.500t20 9.500h608q13 0 25.500-9.500t16.500-22.500l21-64q4-13-2-22.500t-20-9.500h-608q-13 0-25.500 9.500t-16.500 22.500z"/></svg>
            </button>
            <button type="button" aria-label="Help" class="ml-[12px] w-[54px] h-[38px] rounded-[3px] border border-[#ccc] bg-[#e8e8e8] flex items-center justify-center">
              <svg class="w-[23px] h-[23px]" viewBox="0 0 1792 1792"><circle cx="896" cy="896" r="700" fill="#fff"/><path fill="currentColor" d="M1024 1376v-192q0-14-9-23t-23-9h-192q-14 0-23 9t-9 23v192q0 14 9 23t23 9h192q14 0 23-9t9-23zm256-672q0-88-55.500-163t-138.500-116-170-41q-243 0-371 213-15 24 8 42l132 100q7 6 19 6 16 0 25-12 53-68 86-92 34-24 86-24 48 0 85.500 26t37.500 59q0 38-20 61t-68 45q-63 28-115.500 86.500t-52.500 125.500v36q0 14 9 23t23 9h192q14 0 23-9t9-23q0-19 21.500-49.500t54.500-49.500q32-18 49-28.500t46-35 44.500-48 28-60.500 12.500-81zm384 192q0 209-103 385.500t-279.500 279.500-385.500 103-385.500-103-279.500-279.500-103-385.500 103-385.500 279.500-279.500 385.500-103 385.500 103 279.500 279.500 103 385.500z"/></svg>
            </button>
          </div>

          <div class="flex-1 bg-white border border-b-0 border-[#ccd0d2]">
            <div class="px-[5px] pb-[12px] rounded-lg border border-[#ccd0d2]">
              <h2 class="h-[50px] pt-[19px] pl-4 text-[19px] leading-6 text-[#1d3f77]">Document Information</h2>
              <div class="h-[48px] px-3 rounded-t-[5px] border border-b-0 border-[#ddd] bg-[#f3f3f3] flex items-center">
                <a href="#" class="flex items-center gap-2 text-[#337ab7]">
                  <svg class="w-[13px] h-[13px]" viewBox="128 128 1536 1536" fill="#0a1f6b"><path d="M1664 896q0 156-61 298t-164 245-245 164-298 61q-172 0-327-72.500t-264-204.500q-7-10-6.500-22.500t8.500-20.500l137-138q10-9 25-9 16 2 23 12 73 95 179 147t225 52q104 0 198.500-40.500t163.500-109.500 109.500-163.500 40.500-198.500-40.500-198.500-109.500-163.500-163.500-109.500-198.500-40.500q-98 0-188 35.500t-160 101.500l137 138q31 30 14 69-17 40-59 40h-448q-26 0-45-19t-19-45v-448q0-42 40-59 39-17 69 14l130 129q107-101 244.500-156.500t284.500-55.500q156 0 298 61t245 164 164 245 61 298zm-640-288v448q0 14-9 23t-23 9h-320q-14 0-23-9t-9-23v-64q0-14 9-23t23-9h224v-352q0-14 9-23t23-9h64q14 0 23 9t9 23z"/></svg>
                  Audit Trail
                </a>
              </div>
              <div class="h-[43px] pb-[3px] flex items-center text-[17px] text-[#337ab7]">
                <svg class="mr-[4px] w-[19px] h-[18px]" viewBox="-64 0 1900 1792" fill="currentColor"><path d="M384 448q0-53-37.500-90.500t-90.500-37.500-90.500 37.500-37.500 90.500 37.500 90.500 90.500 37.500 90.500-37.500 37.500-90.500zm1067 576q0 53-37 90l-491 492q-39 37-91 37-53 0-90-37l-715-716q-38-37-64.500-101t-26.500-117v-416q0-52 38-90t90-38h416q53 0 117 26.500t102 64.500l715 714q37 39 37 91zm384 0q0 53-37 90l-491 492q-39 37-91 37-36 0-59-14t-53-45l470-470q37-37 37-90 0-52-37-91l-715-714q-38-38-102-64.500t-117-26.500h224q53 0 117 26.500t102 64.500l715 714q37 39 37 91z"/></svg>
                <a href="#">Tags,</a>
                <svg class="ml-[6px] mr-[5px] w-[18px] h-[18px]" viewBox="0 0 1792 1792" fill="currentColor"><path d="M1408 768q0 139-94 257t-256.500 186.500-353.500 68.500q-86 0-176-16-124 88-278 128-36 9-86 16h-3q-11 0-20.500-8t-11.500-21q-1-3-1-6.500t.5-6.500 2-6l2.500-5t3.500-5.500 4-5 4.500-5 4-4.500q5-6 23-25t26-29.500 22.500-29 25-38.500 20.500-44q-124-72-195-177t-71-224q0-139 94-257t256.500-186.500 353.500-68.500 353.500 68.500 256.500 186.500 94 257zm384 256q0 120-71 224.500t-195 176.500q10 24 20.500 44t25 38.500 22.500 29 26 29.500 23 25q1 1 4 4.500t4.500 5 4 5 3.500 5.500l2.500 5t2 6 .5 6.500-1 6.500q-3 14-13 22t-22 7q-50-7-86-16-154-40-278-128-90 16-176 16-271 0-472-132 58 4 88 4 161 0 309-45t264-129q125-92 192-212t67-254q0-77-23-152 129 71 204 178t75 230z"/></svg>
                <a href="#">Comments,</a>
                <svg class="ml-[6px] mr-[3px] w-[15px] h-[15px]" viewBox="80 100 1560 1600" fill="currentColor"><path d="M1596 1385q0 117-79 196t-196 79q-135 0-235-100l-777-776q-113-115-113-271 0-159 110-270t269-111q158 0 273 113l605 606q10 10 10 22 0 16-30.500 46.500t-46.500 30.500q-13 0-23-10l-606-607q-79-77-181-77-106 0-179 75t-73 181q0 105 76 181l776 777q63 63 145 63 64 0 106-42t42-106q0-82-63-145l-581-581q-26-24-60-24-29 0-48 19t-19 48q0 32 25 59l410 410q10 10 10 22 0 16-31 47t-47 31q-12 0-22-10l-410-410q-63-61-63-149 0-82 57-139t139-57q88 0 149 63l581 581q100 98 100 235z"/></svg>
                <a href="#">Attachments</a>
              </div>
              <div class="h-[93px] pt-[12px] rounded-[5px] border border-[#d5d5d5] bg-[#f3f3f3]">
                <div class="-mx-[2px] h-[35px] pl-3 pr-[10px] pb-px rounded-[3px] border border-[#d5d5d5] bg-white shadow-[inset_0_1px_1px_rgba(0,0,0,0.08)] flex items-center">
                  <input type="text" aria-label="Search tag, comment, attachment" placeholder="Search tag,comment,attachment" class="min-w-0 flex-1 h-full placeholder:text-[#999] outline-none">
                  <svg class="mb-[2px] w-4 h-4 text-black"><use href="#i-search" fill="currentColor"/></svg>
                </div>
                <a href="#" class="mt-[9px] ml-[8px] flex items-center gap-[5px] leading-[18px] text-[#337ab7]"><span class="border-y-4 border-l-5 border-y-transparent border-l-[#337ab7]"></span>Options</a>
              </div>
              <div class="h-[49px] px-3 rounded-b-[5px] border border-[#ddd] bg-[#f3f3f3] flex items-center justify-between">
                <a href="#" class="flex items-center gap-2 text-[#337ab7]">
                  <svg class="w-[15px] h-[15px]" viewBox="0 0 15 15" fill="none" stroke="#333" stroke-width="1.200"><path d="M5.500 11H.6V4.500L4.500.6h4.400V4M4.500.6v4H.6"/><path d="M6 14.400V7.500L9.500 4h4.900v10.400zM9.500 4v4H6"/></svg>
                  Vouchers
                </a>
                <span class="w-5 h-5 rounded-full bg-[#777] text-white text-[13px] font-bold leading-5 text-center">0</span>
              </div>
            </div>
          </div>
        </aside>
      </div>
    </div>
  </div>
</body>
</html>
